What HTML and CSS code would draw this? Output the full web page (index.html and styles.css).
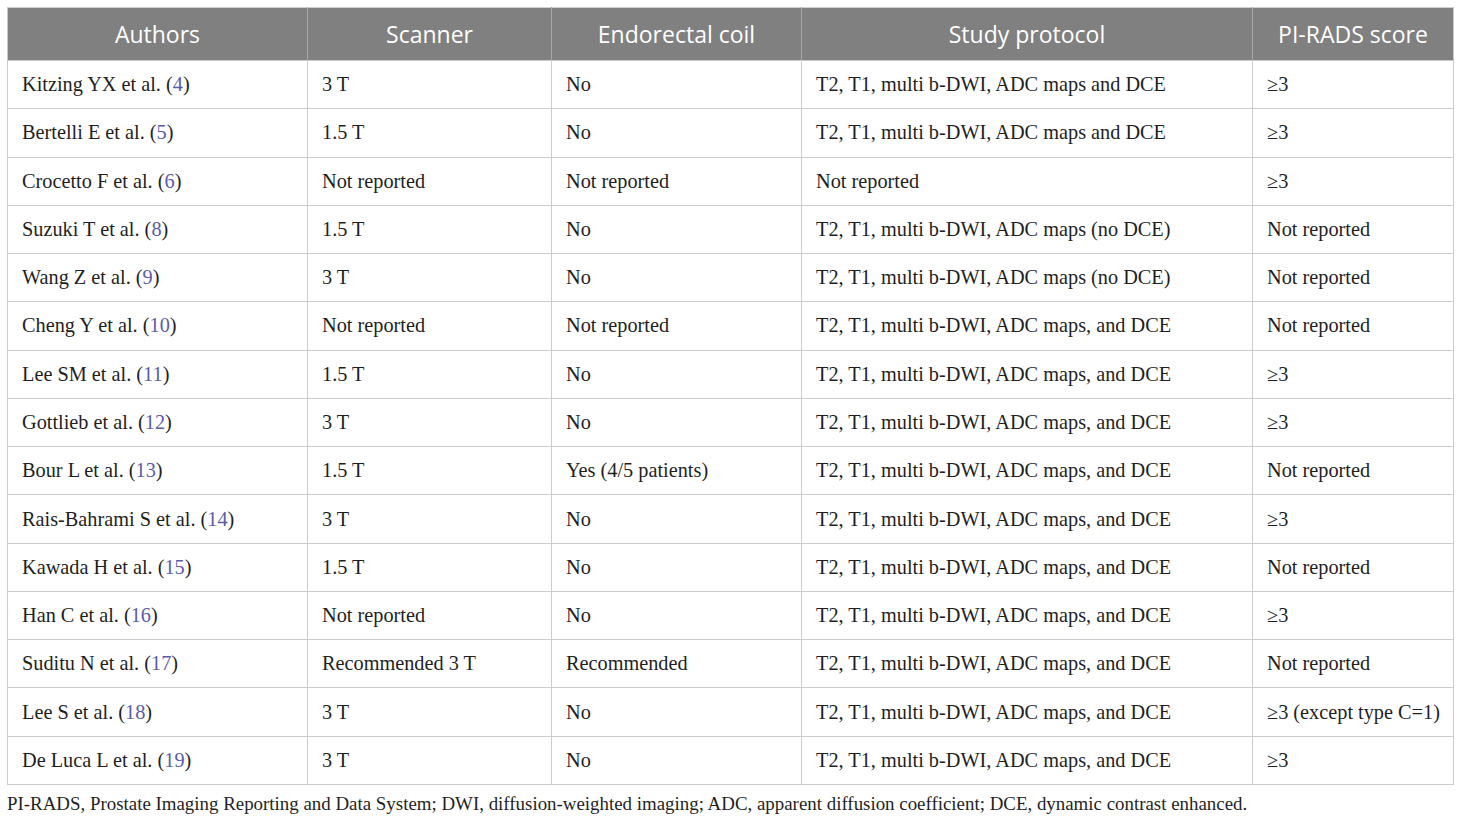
FILE: index.html
```html
<!DOCTYPE html>
<html>
<head>
<meta charset="utf-8">
<link rel="stylesheet" href="styles.css">
</head>
<body>
<div class="wrap">
<table class="data">
<colgroup>
<col class="c1"><col class="c2"><col class="c3"><col class="c4"><col class="c5">
</colgroup>
<thead>
<tr><th>Authors</th><th>Scanner</th><th>Endorectal coil</th><th>Study protocol</th><th>PI-RADS score</th></tr>
</thead>
<tbody>
<tr><td>Kitzing YX et al. (<a>4</a>)</td><td>3 T</td><td>No</td><td>T2, T1, multi b-DWI, ADC maps and DCE</td><td>≥3</td></tr>
<tr><td>Bertelli E et al. (<a>5</a>)</td><td>1.5 T</td><td>No</td><td>T2, T1, multi b-DWI, ADC maps and DCE</td><td>≥3</td></tr>
<tr><td>Crocetto F et al. (<a>6</a>)</td><td>Not reported</td><td>Not reported</td><td>Not reported</td><td>≥3</td></tr>
<tr><td>Suzuki T et al. (<a>8</a>)</td><td>1.5 T</td><td>No</td><td>T2, T1, multi b-DWI, ADC maps (no DCE)</td><td>Not reported</td></tr>
<tr><td>Wang Z et al. (<a>9</a>)</td><td>3 T</td><td>No</td><td>T2, T1, multi b-DWI, ADC maps (no DCE)</td><td>Not reported</td></tr>
<tr><td>Cheng Y et al. (<a>10</a>)</td><td>Not reported</td><td>Not reported</td><td>T2, T1, multi b-DWI, ADC maps, and DCE</td><td>Not reported</td></tr>
<tr><td>Lee SM et al. (<a>11</a>)</td><td>1.5 T</td><td>No</td><td>T2, T1, multi b-DWI, ADC maps, and DCE</td><td>≥3</td></tr>
<tr><td>Gottlieb et al. (<a>12</a>)</td><td>3 T</td><td>No</td><td>T2, T1, multi b-DWI, ADC maps, and DCE</td><td>≥3</td></tr>
<tr><td>Bour L et al. (<a>13</a>)</td><td>1.5 T</td><td>Yes (4/5 patients)</td><td>T2, T1, multi b-DWI, ADC maps, and DCE</td><td>Not reported</td></tr>
<tr><td>Rais-Bahrami S et al. (<a>14</a>)</td><td>3 T</td><td>No</td><td>T2, T1, multi b-DWI, ADC maps, and DCE</td><td>≥3</td></tr>
<tr><td>Kawada H et al. (<a>15</a>)</td><td>1.5 T</td><td>No</td><td>T2, T1, multi b-DWI, ADC maps, and DCE</td><td>Not reported</td></tr>
<tr><td>Han C et al. (<a>16</a>)</td><td>Not reported</td><td>No</td><td>T2, T1, multi b-DWI, ADC maps, and DCE</td><td>≥3</td></tr>
<tr><td>Suditu N et al. (<a>17</a>)</td><td>Recommended 3 T</td><td>Recommended</td><td>T2, T1, multi b-DWI, ADC maps, and DCE</td><td>Not reported</td></tr>
<tr><td>Lee S et al. (<a>18</a>)</td><td>3 T</td><td>No</td><td>T2, T1, multi b-DWI, ADC maps, and DCE</td><td>≥3 (except type C=1)</td></tr>
<tr><td>De Luca L et al. (<a>19</a>)</td><td>3 T</td><td>No</td><td>T2, T1, multi b-DWI, ADC maps, and DCE</td><td>≥3</td></tr>
</tbody>
</table>
<p class="note">PI-RADS, Prostate Imaging Reporting and Data System; DWI, diffusion-weighted imaging; ADC, apparent diffusion coefficient; DCE, dynamic contrast enhanced.</p>
</div>
</body>
</html>
```
FILE: styles.css
```css
html, body {
  margin: 0;
  padding: 0;
  background: #ffffff;
}
.wrap {
  padding: 7px 0 0 7px;
}
.data {
  border-collapse: collapse;
  table-layout: fixed;
  width: 1446px;
  font-family: "Liberation Serif", "Times New Roman", serif;
  font-size: 20.3px;
  color: #1f1f1f;
}
.c1 { width: 300px; }
.c2 { width: 244px; }
.c3 { width: 250px; }
.c4 { width: 451px; }
.c5 { width: 201px; }
.data th {
  background: #808080;
  color: #ffffff;
  font-family: "Open Sans", "Liberation Sans", sans-serif;
  font-weight: 400;
  font-size: 23px;
  height: 53px;
  padding: 0;
  text-align: center;
  border: 1px solid #c8c8c8;
  border-top-color: #d0d0d0;
  border-left-color: #a8a8a8;
  border-right-color: #a8a8a8;
  box-sizing: border-box;
}
.data th:first-child { border-left-color: #c8c8c8; }
.data th:last-child { border-right-color: #c8c8c8; }
.data td {
  border: 1px solid #cccccc;
  height: 48.27px;
  padding: 0 0 0 14px;
  box-sizing: border-box;
  white-space: nowrap;
}
.data a {
  color: #5a5ca8;
}
.note {
  margin: 8px 0 0 0;
  font-family: "Liberation Serif", "Times New Roman", serif;
  font-size: 18.9px;
  color: #1f1f1f;
}
```
